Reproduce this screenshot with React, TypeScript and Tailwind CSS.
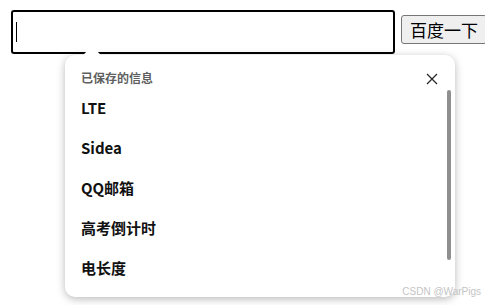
import React from "react";

const saved = ["LTE", "Sidea", "QQ邮箱", "高考倒计时", "电长度"];

export default function App() {
  return (
    <div
      className="relative w-[485px] h-[305px] bg-white overflow-hidden"
      style={{ fontFamily: '"Noto Sans CJK SC", "Noto Sans", sans-serif' }}
    >
      <div className="flex items-start pl-[11px] pt-[10px]">
        <div className="relative shrink-0 w-[384px] h-[44px] border-2 border-black rounded-[3px] bg-white">
          <span className="absolute left-[3px] top-[10px] w-px h-[20px] bg-black" />

          {/* saved info dropdown */}
          <div className="absolute left-[52px] top-[43px] w-[390px] h-[242px] bg-white rounded-[10px] shadow-[0_2px_8px_rgba(0,0,0,0.28)] z-10">
            <div className="absolute left-[20px] -top-[6px] w-[14px] h-[14px] rotate-45 bg-white rounded-tl-[3px]" />
            <div className="relative flex items-center justify-between pl-[16px] pr-[17px] pt-[13px] h-[33px]">
              <span className="text-[12px] leading-[16px] font-semibold text-[#5f5f5f]">
                已保存的信息
              </span>
              <svg width="12" height="12" viewBox="0 0 12 12" className="mt-[1px]">
                <path d="M1 1L11 11M11 1L1 11" stroke="#222" strokeWidth="1.2" />
              </svg>
            </div>
            <ul className="relative">
              {saved.map((s) => (
                <li
                  key={s}
                  className="h-[40px] pl-[16px] flex items-center text-[15px] font-bold text-[#111]"
                >
                  {s}
                </li>
              ))}
            </ul>
            <div className="absolute left-[382px] top-[35px] w-[4px] h-[170px] rounded-full bg-[#8f8f8f]" />
          </div>
        </div>
        <button className="shrink-0 ml-[6px] mt-[5px] h-[29px] px-[8px] border border-[#767676] rounded-[3px] bg-[#efefef] text-[17px] leading-[20px] text-black whitespace-nowrap">
          百度一下
        </button>
      </div>
      <span
        className="absolute right-[4px] bottom-[8px] text-[10px] leading-[10px] text-[#c4c4c4] z-20"
        style={{ fontFamily: '"Liberation Sans", sans-serif' }}
      >
        CSDN @WarPigs
      </span>
    </div>
  );
}
